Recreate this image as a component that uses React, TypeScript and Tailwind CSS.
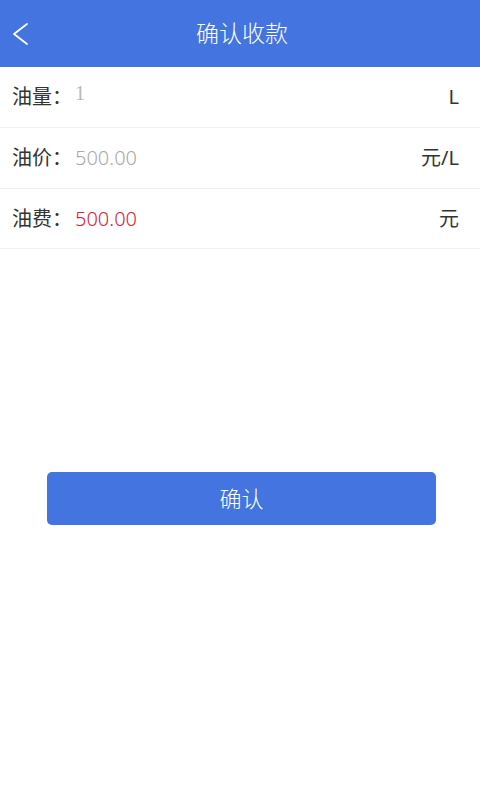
interface RowProps {
  label: string;
  value: string;
  unit: string;
  valueClass: string;
  height: string;
}

function FieldRow({ label, value, unit, valueClass, height }: RowProps) {
  return (
    <div className={`flex items-center justify-between border-b border-[#f0f0f0] pl-3 pr-[21px] ${height}`}>
      <div className="flex items-center">
        <span className="w-[63px] text-[20px] font-normal text-[#333333]">{label}</span>
        <span className={valueClass}>{value}</span>
      </div>
      <span className="text-[20px] font-normal text-[#333333]">{unit}</span>
    </div>
  );
}

export default function App() {
  return (
    <div
      className="min-h-[800px] w-[480px] bg-white font-light"
      style={{ fontFamily: '"Noto Sans", "Noto Sans CJK SC", sans-serif' }}
    >
      <header className="relative flex h-[67px] items-center justify-center bg-[#4374e0]">
        <svg
          className="absolute left-[12px] top-[22px]"
          width="18"
          height="24"
          viewBox="0 0 18 24"
          fill="none"
          stroke="white"
          strokeWidth="1.8"
          strokeLinecap="round"
          strokeLinejoin="round"
        >
          <polyline points="15,2 2,12 15,22" />
        </svg>
        <h1 className="pl-[4px] text-[23px] text-white">确认收款</h1>
      </header>
      <FieldRow
        label="油量："
        value="1"
        unit="L"
        height="h-[61px]"
        valueClass="-mt-[8px] text-[20px] font-normal text-[#b8b8b8] [font-family:'Liberation_Serif',serif]"
      />
      <FieldRow
        label="油价："
        value="500.00"
        unit="元/L"
        height="h-[61px]"
        valueClass="text-[20px] text-[#a9a9a9]"
      />
      <FieldRow
        label="油费："
        value="500.00"
        unit="元"
        height="h-[60px]"
        valueClass="text-[20px] text-[#d8203a]"
      />
      <div className="flex justify-center pl-[3px] pt-[223px]">
        <button className="h-[53px] w-[389px] rounded-[5px] bg-[#4374e0] text-[22px] font-light text-white">
          确认
        </button>
      </div>
    </div>
  );
}
